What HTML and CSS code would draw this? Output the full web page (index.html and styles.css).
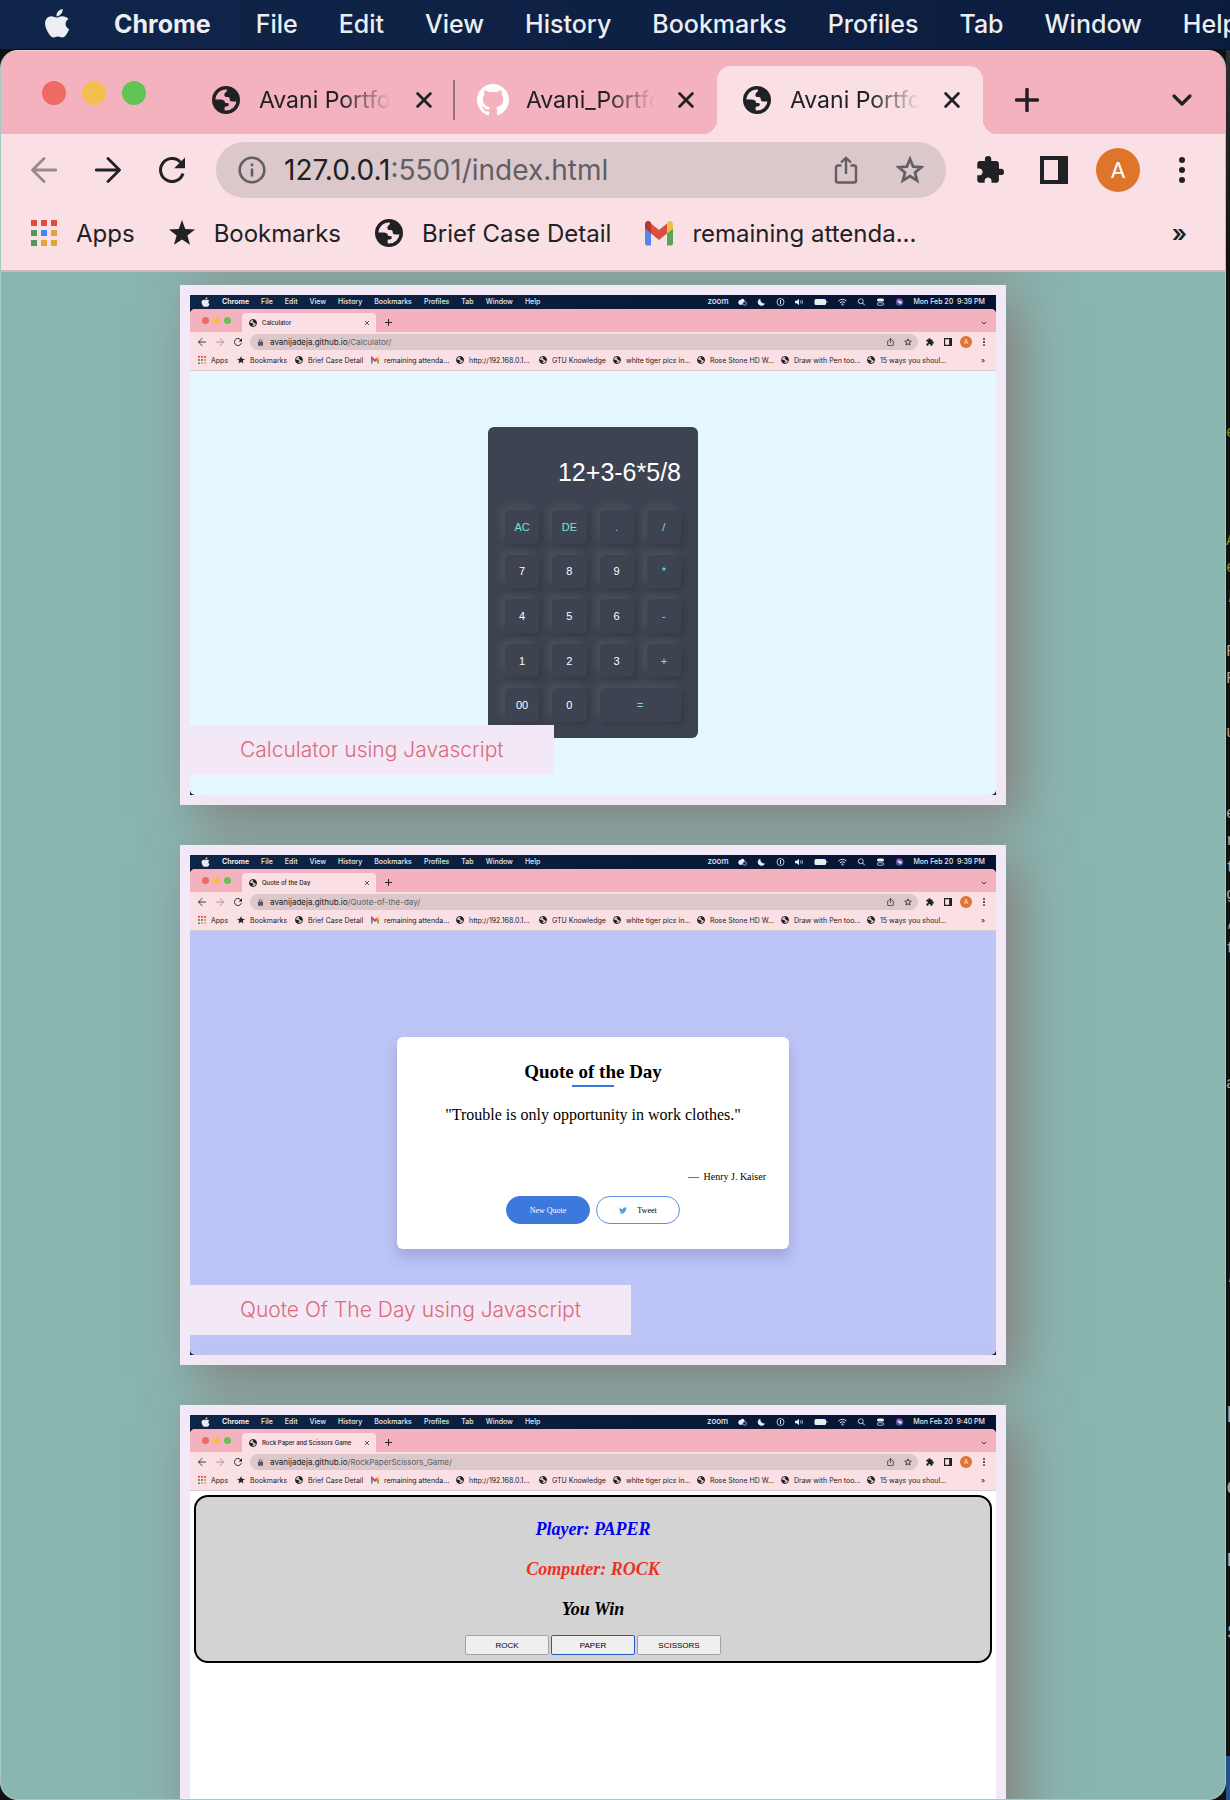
FILE: index.html
```html
<!DOCTYPE html>
<html lang="en">
<head>
<meta charset="utf-8">
<title>Avani Portfolio</title>
<link rel="stylesheet" href="styles.css">
</head>
<body>
<svg class="sprite" aria-hidden="true">
  <symbol id="apple" viewBox="0 0 24 28"><path d="M17.2 1c.2 2-.6 3.700-1.700 4.900-1.100 1.200-2.600 2-4 1.900-.2-1.800.6-3.600 1.600-4.700C14.200 1.900 15.900 1.100 17.200 1zM22.600 10.200c-1.700 1-2.700 2.500-2.700 4.600 0 2.400 1.300 4.200 3.300 5-.7 2-1.700 3.800-2.900 5.300-.9 1.200-1.900 2.300-3.500 2.300-1.500 0-2-.9-4-.9-1.900 0-2.600.9-4 .9-1.500.1-2.700-1.200-3.700-2.500C2.900 21.900 1 17.500 1 14.500 1 10.300 3.700 7.800 6.900 7.800c1.900 0 3.400 1.200 4.700 1.200 1.200 0 3-1.300 5.200-1.300 2.300 0 4.500 1 5.800 2.500z"/></symbol>
  <symbol id="globe" viewBox="0 0 28 28"><circle cx="14" cy="14" r="12.300" fill="none" stroke="currentColor" stroke-width="3.400"/><path d="M15 2c0 2 .4 3-1.200 4.200-1.300 1-1.800 2.200-1.300 3.500.4 1.200 1.500 1.500 3 1.300 1.500-.2 2.200.5 2.200 2 0 1.700 1 2.500 2.500 2.500h6.300C27 8 22 2 15 2z"/><path d="M2 13.500h6.500c3 0 4.500 1.500 4.700 3.500h2c1.300 0 1.800.8 1.500 2-.3 1.300-1.200 1.500-2.700 1.500-.9 0-1.400.5-1.400 1.500v4C6 25.500 2 20 2 13.500z"/></symbol>
  <symbol id="github" viewBox="0 0 16 16"><path d="M8 0C3.580 0 0 3.580 0 8c0 3.540 2.290 6.530 5.470 7.590.4.070.55-.17.55-.38 0-.19-.01-.82-.01-1.490-2.010.37-2.530-.49-2.690-.94-.09-.23-.48-.94-.82-1.130-.28-.15-.68-.52-.01-.53.63-.01 1.080.58 1.230.82.72 1.210 1.870.87 2.330.66.07-.52.28-.87.51-1.070-1.780-.2-3.640-.89-3.640-3.950 0-.87.31-1.590.82-2.150-.08-.2-.36-1.020.08-2.120 0 0 .67-.21 2.200.82a7.600 7.600 0 0 1 4 0c1.530-1.040 2.200-.82 2.200-.82.44 1.100.16 1.920.08 2.120.51.56.82 1.270.82 2.150 0 3.070-1.870 3.750-3.650 3.950.29.25.54.73.54 1.480 0 1.070-.01 1.930-.01 2.200 0 .21.15.46.55.38A8 8 0 0 0 16 8c0-4.420-3.580-8-8-8z"/></symbol>
  <symbol id="close" viewBox="0 0 24 24"><path d="M5 5l14 14M19 5L5 19" fill="none" stroke="currentColor" stroke-width="3" stroke-linecap="round"/></symbol>
  <symbol id="plus" viewBox="0 0 24 24"><path d="M12 1.500v21M1.500 12h21" fill="none" stroke="currentColor" stroke-width="3.500" stroke-linecap="round"/></symbol>
  <symbol id="chevron" viewBox="0 0 24 24"><path d="M4 8l8 8 8-8" fill="none" stroke="currentColor" stroke-width="3.200" stroke-linecap="round" stroke-linejoin="round"/></symbol>
  <symbol id="back" viewBox="0 0 26 26"><path d="M25 13H2M13 1.500L1.500 13 13 24.500" fill="none" stroke="currentColor" stroke-width="2.800" stroke-linejoin="round" stroke-linecap="round"/></symbol>
  <symbol id="forward" viewBox="0 0 26 26"><path d="M1 13h23M13 1.500L24.500 13 13 24.500" fill="none" stroke="currentColor" stroke-width="2.800" stroke-linejoin="round" stroke-linecap="round"/></symbol>
  <symbol id="reload" viewBox="0 0 26 26"><path d="M24 16.500A11.500 11.500 0 1 1 21.500 5.200" fill="none" stroke="currentColor" stroke-width="3"/><path d="M26 .5v10.800H15.200z"/></symbol>
  <symbol id="info" viewBox="0 0 28 28"><circle cx="14" cy="14" r="12.300" fill="none" stroke="currentColor" stroke-width="2.600"/><path d="M12.700 12.500h2.600v8h-2.600zM12.700 7.500h2.600v2.700h-2.600z"/></symbol>
  <symbol id="lock" viewBox="0 0 12 16"><path d="M0 6h12v10H0z"/><path d="M3 7V4a3 3 0 0 1 6 0v3" fill="none" stroke="currentColor" stroke-width="1.800"/></symbol>
  <symbol id="share" viewBox="0 0 24 28"><path d="M7.500 9.500H4a2 2 0 0 0-2 2v13a2 2 0 0 0 2 2h16a2 2 0 0 0 2-2v-13a2 2 0 0 0-2-2h-3.500M12 18V2M7 6.500L12 1.800l5 4.700" fill="none" stroke="currentColor" stroke-width="2.400"/></symbol>
  <symbol id="star-line" viewBox="0 0 24 24"><path d="M12 2.500l2.700 6.600 7.100.5-5.500 4.600 1.800 6.900-6.100-3.800-6.100 3.800 1.800-6.900-5.500-4.600 7.100-.5z" fill="none" stroke="currentColor" stroke-width="2.300"/></symbol>
  <symbol id="star" viewBox="0 0 24 24"><path d="M12 0l3 8.300 9 .4-7 5.500 2.400 8.600L12 18l-7.400 4.800L7 14.200 0 8.700l9-.4z"/></symbol>
  <symbol id="puzzle" viewBox="1 1 22 22"><path d="M20.500 11H19V7c0-1.100-.9-2-2-2h-4V3.500a2.500 2.500 0 0 0-5 0V5H4c-1.100 0-1.990.9-1.990 2v3.800H3.500c1.490 0 2.700 1.210 2.700 2.700s-1.210 2.700-2.700 2.700H2V20c0 1.100.9 2 2 2h3.800v-1.500c0-1.490 1.210-2.700 2.700-2.700s2.700 1.210 2.700 2.700V22H17c1.100 0 2-.9 2-2v-4h1.500a2.500 2.500 0 0 0 0-5z"/></symbol>
  <symbol id="panel" viewBox="0 0 28 28"><path d="M0 0h28v28H0zM4 4v20h14V4z" fill-rule="evenodd"/></symbol>
  <symbol id="dots" viewBox="0 0 6 26"><circle cx="3" cy="3" r="3"/><circle cx="3" cy="13" r="3"/><circle cx="3" cy="23" r="3"/></symbol>
  <symbol id="apps" viewBox="0 0 26 26"><path fill="#e24a3b" d="M0 0h6v6H0zM10 0h6v6h-6zM20 0h6v6h-6z"/><path fill="#4f9a58" d="M0 10h6v6H0zM0 20h6v6H0z"/><path fill="#4285f4" d="M10 10h6v6h-6z"/><path fill="#e3a53b" d="M20 10h6v6h-6zM10 20h6v6h-6zM20 20h6v6h-6z"/></symbol>
  <symbol id="gmail" viewBox="0 0 28 25"><path fill="#5186ec" d="M0 8l6 4.500V25H2a2 2 0 0 1-2-2z"/><path fill="#57a55b" d="M28 8l-6 4.500V25h4a2 2 0 0 0 2-2z"/><path fill="#d95040" d="M6 3l8 6.500L22 3v10l-8 6.500L6 13z"/><path fill="#b5362a" d="M0 4C0 .5 3.300-1 6 2v11L0 8z"/><path fill="#f2be42" d="M28 4c0-3.500-3.300-5-6-2v11l6-5z"/></symbol>
  <symbol id="bird" viewBox="0 0 24 20"><path fill="#4ba3f0" d="M24 2.400c-.9.400-1.800.6-2.800.8 1-.6 1.800-1.600 2.200-2.700-1 .6-2 1-3.100 1.200A4.900 4.900 0 0 0 11.900 6C7.800 5.800 4.200 3.900 1.700.9c-1.300 2.200-.7 5.100 1.500 6.600-.8 0-1.600-.2-2.200-.6 0 2.300 1.600 4.400 3.900 4.900-.7.200-1.500.2-2.200.1.600 2 2.400 3.400 4.600 3.400A9.900 9.900 0 0 1 0 17.300 14 14 0 0 0 21.500 4.900c1-.7 1.800-1.600 2.500-2.500z"/></symbol>
  <symbol id="battery" viewBox="0 0 26 12"><rect width="23" height="12" rx="3"/><path d="M24.500 4v4"  stroke="currentColor" stroke-width="1.500"/></symbol>
  <symbol id="moon" viewBox="0 0 16 16"><path d="M6 1a7.500 7.500 0 1 0 9 10A8 8 0 0 1 6 1z"/></symbol>
  <symbol id="circle-one" viewBox="0 0 16 16"><circle cx="8" cy="8" r="7" fill="none" stroke="currentColor" stroke-width="1.600"/><path d="M7 4h2v8H7z"/></symbol>
  <symbol id="sound" viewBox="0 0 20 16"><path d="M0 5h4l5-4v14l-5-4H0z"/><path d="M12 5q2 3 0 6M15 3q4 5 0 10" fill="none" stroke="currentColor" stroke-width="1.500"/></symbol>
  <symbol id="wifi" viewBox="0 0 20 16"><path d="M1 6q9-8 18 0M4.500 9.500q5.500-5 11 0M8 13l2 2 2-2q-2-1.500-4 0z" fill="none" stroke="currentColor" stroke-width="2.200"/></symbol>
  <symbol id="search" viewBox="0 0 16 16"><circle cx="6.500" cy="6.500" r="5" fill="none" stroke="currentColor" stroke-width="1.600"/><path d="M10 10l5 5" stroke="currentColor" stroke-width="1.800"/></symbol>
  <symbol id="toggles" viewBox="0 0 16 16"><rect x="1" y="1" width="14" height="6" rx="3"/><rect x="1.500" y="9.500" width="13" height="5" rx="2.500" fill="none" stroke="currentColor" stroke-width="1.500"/></symbol>
  <symbol id="siri" viewBox="0 0 16 16"><circle cx="8" cy="8" r="7.500" fill="#5b4aa0"/><circle cx="6" cy="6" r="3.500" fill="#e05a8a"/><circle cx="10" cy="9" r="3.500" fill="#6fc7e8"/><circle cx="8" cy="8" r="2" fill="#fff"/></symbol>
  <symbol id="cloud" viewBox="0 0 20 16"><circle cx="6" cy="9" r="5.500"/><circle cx="10" cy="5" r="4.500"/><circle cx="14.500" cy="11" r="4" fill="#06183a" stroke="currentColor" stroke-width="1.500"/></symbol>
</svg>

<nav class="menubar" aria-label="Menu bar">
  <svg class="menubar-logo"><use href="#apple"/></svg>
  <a href="#" class="menubar-app">Chrome</a><a href="#">File</a><a href="#">Edit</a><a href="#">View</a><a href="#">History</a><a href="#">Bookmarks</a><a href="#">Profiles</a><a href="#">Tab</a><a href="#">Window</a><a href="#">Help</a>
</nav>

<div class="desktop">
  <div class="window">
    <div class="tabstrip">
      <div class="lights"><i class="red"></i><i class="amber"></i><i class="green"></i></div>
      <div class="tab tab-ruled"><svg class="icon-l"><use href="#globe"/></svg><span class="tab-title">Avani Portfolio</span><button aria-label="Close tab"><svg><use href="#close"/></svg></button></div>
      <div class="tab tab-github"><svg class="icon-xl"><use href="#github"/></svg><span class="tab-title">Avani_Portfolio</span><button aria-label="Close tab"><svg><use href="#close"/></svg></button></div>
      <div class="tab tab-active"><svg class="icon-l"><use href="#globe"/></svg><span class="tab-title">Avani Portfolio</span><button aria-label="Close tab"><svg><use href="#close"/></svg></button></div>
      <button class="new-tab" aria-label="New tab"><svg><use href="#plus"/></svg></button>
      <button class="tab-menu" aria-label="Search tabs"><svg><use href="#chevron"/></svg></button>
    </div>
    <div class="toolbar">
      <button class="faded" aria-label="Back"><svg><use href="#back"/></svg></button>
      <button aria-label="Forward"><svg><use href="#forward"/></svg></button>
      <button aria-label="Reload"><svg><use href="#reload"/></svg></button>
      <div class="omnibox">
        <svg class="icon-l"><use href="#info"/></svg>
        <label for="address">127.0.0.1</label><input id="address" type="text" value=":5501/index.html">
        <button aria-label="Share"><svg class="share"><use href="#share"/></svg></button>
        <button aria-label="Bookmark this page"><svg class="icon-l"><use href="#star-line"/></svg></button>
      </div>
      <div class="tools">
        <button aria-label="Extensions"><svg class="icon-l"><use href="#puzzle"/></svg></button>
        <button aria-label="Side panel"><svg class="icon-l"><use href="#panel"/></svg></button>
        <button class="avatar">A</button>
        <button class="overflow" aria-label="More"><svg class="dots"><use href="#dots"/></svg></button>
      </div>
    </div>
    <div class="bookmarks">
      <a href="#"><svg><use href="#apps"/></svg>Apps</a>
      <a href="#"><svg><use href="#star"/></svg>Bookmarks</a>
      <a href="#"><svg class="icon-l"><use href="#globe"/></svg>Brief Case Detail</a>
      <a href="#"><svg class="icon-l"><use href="#gmail"/></svg>remaining attenda...</a>
      <button class="more" aria-label="More bookmarks">»</button>
    </div>

    <main class="page">
      <div class="card card-previous"></div>

      <article class="card">
        <div class="shot">
          <div class="shot-chrome" data-title="Calculator" data-path="Calculator/" data-time="9:39"></div>
          <div class="shot-body sky">
            <div class="calculator">
              <output>12+3-6*5/8</output>
              <div class="keys">
                <button class="op">AC</button><button class="op">DE</button><button class="op">.</button><button class="op">/</button>
                <button>7</button><button>8</button><button>9</button><button class="op">*</button>
                <button>4</button><button>5</button><button>6</button><button class="op">-</button>
                <button>1</button><button>2</button><button>3</button><button class="op">+</button>
                <button>00</button><button>0</button><button class="op wide">=</button>
              </div>
            </div>
          </div>
        </div>
        <h2 class="caption">Calculator using Javascript</h2>
      </article>

      <article class="card">
        <div class="shot">
          <div class="shot-chrome" data-title="Quote of the Day" data-path="Quote-of-the-day/" data-time="9:39"></div>
          <div class="shot-body lilac">
            <div class="quote">
              <h3>Quote of the Day</h3>
              <p class="quote-text">"Trouble is only opportunity in work clothes."</p>
              <p class="quote-author">Henry J. Kaiser</p>
              <div class="quote-actions">
                <button class="primary">New Quote</button>
                <button><svg><use href="#bird"/></svg>Tweet</button>
              </div>
            </div>
          </div>
        </div>
        <h2 class="caption">Quote Of The Day using Javascript</h2>
      </article>

      <article class="card">
        <div class="shot">
          <div class="shot-chrome" data-title="Rock Paper and Scissors Game" data-path="RockPaperScissors_Game/" data-time="9:40"></div>
          <div class="shot-body white">
            <div class="game">
              <p class="player">Player: PAPER</p>
              <p class="computer">Computer: ROCK</p>
              <p>You Win</p>
              <div class="game-actions"><button>ROCK</button><button class="picked">PAPER</button><button>SCISSORS</button></div>
            </div>
          </div>
        </div>
      </article>
    </main>
  </div>

  <aside class="editor" aria-hidden="true">
<pre class="code olive">e



A
e
;</pre>
<pre class="code">

F
F

u


e
r
t
g
,
t




a</pre>
<pre class="code large">

,
;
F
o
n
s</pre>
  <div class="editor-status"></div>
  </aside>
</div>

<template id="shot-chrome">
  <div class="s-menu">
    <svg class="s-apple"><use href="#apple"/></svg>
    <div class="s-menu-items"><b>Chrome</b><span>File</span><span>Edit</span><span>View</span><span>History</span><span>Bookmarks</span><span>Profiles</span><span>Tab</span><span>Window</span><span>Help</span></div>
    <div class="s-status"><span class="s-zoom">zoom</span><svg><use href="#cloud"/></svg><svg><use href="#moon"/></svg><svg><use href="#circle-one"/></svg><svg><use href="#sound"/></svg><svg class="s-battery"><use href="#battery"/></svg><svg><use href="#wifi"/></svg><svg><use href="#search"/></svg><svg><use href="#toggles"/></svg><svg><use href="#siri"/></svg></div>
    <span class="s-clock"></span>
  </div>
  <div class="s-window">
    <div class="s-tabs">
      <div class="s-lights"><i class="red"></i><i class="amber"></i><i class="green"></i></div>
      <div class="s-tab"><svg><use href="#globe"/></svg><span class="s-title"></span><svg class="s-close"><use href="#close"/></svg></div>
      <svg class="s-plus"><use href="#plus"/></svg>
      <svg class="s-chevron"><use href="#chevron"/></svg>
    </div>
    <div class="s-bar">
      <svg><use href="#back"/></svg><svg class="faded"><use href="#forward"/></svg><svg><use href="#reload"/></svg>
      <div class="s-omnibox"><svg class="s-lock"><use href="#lock"/></svg><span>avanijadeja.github.io</span><span class="s-path"></span><svg class="s-share"><use href="#share"/></svg><svg><use href="#star-line"/></svg></div>
      <div class="s-tools"><svg><use href="#puzzle"/></svg><svg><use href="#panel"/></svg><span class="s-avatar">A</span><svg><use href="#dots"/></svg></div>
    </div>
    <div class="s-marks">
      <span><svg><use href="#apps"/></svg>Apps</span><span><svg><use href="#star"/></svg>Bookmarks</span><span><svg><use href="#globe"/></svg>Brief Case Detail</span><span><svg><use href="#gmail"/></svg>remaining attenda...</span><span><svg><use href="#globe"/></svg>http://192.168.0.1...</span><span><svg><use href="#globe"/></svg>GTU Knowledge</span><span><svg><use href="#globe"/></svg>white tiger pics in...</span><span><svg><use href="#globe"/></svg>Rose Stone HD W...</span><span><svg><use href="#globe"/></svg>Draw with Pen too...</span><span><svg><use href="#globe"/></svg>15 ways you shoul...</span><span class="s-more">»</span>
    </div>
  </div>
</template>
<script src="script.js"></script>
</body>
</html>
```
FILE: script.js
```js
const template = document.getElementById('shot-chrome');

document.querySelectorAll('.shot-chrome').forEach((slot) => {
  const view = template.content.cloneNode(true);
  view.querySelector('.s-title').textContent = slot.dataset.title;
  view.querySelector('.s-path').textContent = '/' + slot.dataset.path;
  view.querySelector('.s-clock').textContent = 'Mon Feb 20\u00a0 ' + slot.dataset.time + ' PM';
  slot.append(view);
});
```
FILE: styles.css
```css
* { box-sizing: border-box; }

:root {
  --rose: #f4b1be;
  --blush: #fae0e4;
  --field: #dcc7ca;
  --ink: #202124;
  --teal: #8ab6b0;
  --frame: #f3e8f5;
}

body {
  margin: 0;
  height: 100vh;
  overflow: hidden;
  display: flex;
  flex-direction: column;
  background: #000;
  color: var(--ink);
  font-family: Inter, "Liberation Sans", sans-serif;
}

a { color: inherit; text-decoration: none; }
button { border: 0; padding: 0; background: none; color: inherit; font: inherit; }
p, h2, h3, pre { margin: 0; }
svg { display: block; fill: currentColor; flex: none; }
.sprite { width: 0; height: 0; position: absolute; }
i { display: block; border-radius: 50%; }
.red { background: #ed6b60; }
.amber { background: #f5bf4f; }
.green { background: #61c555; }
.faded { opacity: .45; }
.icon-l { width: 28px; height: 28px; }
.icon-xl { width: 32px; height: 32px; }

/* System menu bar */
.menubar {
  flex: none;
  display: flex;
  align-items: center;
  gap: 41px;
  height: 49px;
  padding: 0 0 2px 44px;
  overflow: hidden;
  white-space: nowrap;
  background: linear-gradient(90deg, #10254a, #0b1d3f);
  color: #eceef1;
  font-size: 25px;
  font-weight: 500;
}
.menubar-logo { width: 26px; height: 32px; margin: 0 3px 2px 0; }
.menubar-app { font-weight: 700; margin-right: 4px; }

/* Browser window */
.desktop { flex: 1; min-height: 0; display: flex; padding-top: 1px; background: #111; }
.window {
  flex: 1;
  min-width: 0;
  display: flex;
  flex-direction: column;
  overflow: hidden;
  border: 1px solid;
  border-color: #fbd0d8 #a5c9c4 #a5c9c4;
  border-radius: 18px;
  background: var(--teal);
}

.tabstrip { flex: none; display: flex; align-items: flex-end; height: 83px; background: var(--rose); font-size: 23px; }
.lights { display: flex; gap: 16px; align-self: center; margin: 0 53px 0 41px; }
.lights i { width: 24px; height: 24px; }
.tab { display: flex; align-items: center; gap: 19px; height: 68px; padding: 0 20px 0 13px; }
.tab-title {
  flex: 1;
  overflow: hidden;
  white-space: nowrap;
  mask-image: linear-gradient(90deg, #000 60%, transparent 98%);
}
.tab button svg { width: 22px; height: 22px; }
.tab-ruled { width: 256px; background: linear-gradient(#94707a, #94707a) right center / 2px 40px no-repeat; }
.tab-github { width: 262px; gap: 17px; padding-left: 22px; }
.tab-github .icon-xl { color: #fff; }
.tab-active {
  position: relative;
  border-radius: 14px 14px 0 0;
  background: var(--blush);
  width: 266px;
  padding-left: 26px;
}
.tab-active::before, .tab-active::after {
  content: "";
  position: absolute;
  bottom: 0;
  width: 14px;
  height: 14px;
}
.tab-active::before { right: 100%; background: radial-gradient(circle at 0 0, transparent 14px, var(--blush) 14px); }
.tab-active::after { left: 100%; background: radial-gradient(circle at 100% 0, transparent 14px, var(--blush) 14px); }
.new-tab { height: 68px; margin-left: 32px; }
.new-tab svg { width: 24px; height: 24px; }
.tab-menu { height: 68px; margin: 0 31px 0 auto; }
.tab-menu svg { width: 24px; height: 24px; }

.toolbar { flex: none; display: flex; align-items: center; height: 72px; padding: 0 40px 0 30px; background: var(--blush); }
.toolbar > button { width: 26px; margin-right: 38px; }
.toolbar > button:nth-of-type(3) { margin-right: 31px; }
.toolbar > button svg { width: 26px; height: 26px; }
.omnibox {
  flex: 1;
  min-width: 0;
  display: flex;
  align-items: center;
  height: 56px;
  padding: 0 22px;
  border-radius: 28px;
  background: var(--field);
  color: #5f5f64;
  font-size: 28px;
}
.omnibox label { margin-left: 18px; color: var(--ink); }
.omnibox input { flex: 1; min-width: 0; border: 0; padding: 0; background: none; color: inherit; font: inherit; outline: 0; }
.omnibox button + button { margin-left: 38px; }
.share { width: 24px; height: 28px; }
.tools { display: flex; align-items: center; gap: 36px; margin-left: 30px; }
.avatar { width: 44px; height: 44px; border-radius: 50%; margin: 0 -8px; background: #df742b; color: #fff; font-size: 22px; }
.overflow { margin-left: 11px; }
.dots { width: 6px; height: 26px; }

.bookmarks {
  flex: none;
  display: flex;
  gap: 34px;
  height: 66px;
  padding: 0 38px 10px 30px;
  border-bottom: 2px solid #cbb6bb;
  background: var(--blush);
  font-size: 24px;
}
.bookmarks a { display: flex; align-items: center; gap: 19px; }
.bookmarks svg { width: 26px; height: 26px; }
.bookmarks svg.icon-l { width: 28px; height: 28px; }
.more { margin-left: auto; font-weight: 600; }

/* Portfolio page */
.page {
  flex: 1;
  min-height: 0;
  overflow: hidden;
  display: flex;
  flex-direction: column;
  align-items: center;
  gap: 40px;
  padding-right: 40px;
}
.card {
  flex: none;
  display: grid;
  align-items: end;
  width: 826px;
  max-width: 100%;
  padding: 10px;
  background: var(--frame);
  box-shadow: 15px 15px 50px rgba(132, 104, 105, .7);
}
.card-previous { height: 20px; margin-top: -47px; }
.shot, .caption { grid-area: 1 / 1; }
.shot { display: flex; flex-direction: column; height: 500px; background: #06132f; overflow: hidden; }
.caption {
  z-index: 1;
  justify-self: start;
  margin-bottom: 20px;
  padding: 0 50px;
  background: var(--frame);
  color: #dc6a7c;
  font-size: 21px;
  font-weight: 300;
  line-height: 50px;
}
.shot-body { flex: 1; display: flex; flex-direction: column; align-items: center; border-radius: 0 0 5px 5px; }
.sky { background: #e5f7ff; padding-top: 56px; }
.lilac { background: #bdc5f7; padding-top: 106px; }
.white { background: #fff; padding: 4px; }

/* Small browser frame inside each shot */
.shot-chrome { flex: none; font-size: 7px; line-height: 9px; white-space: nowrap; }
.s-menu { display: flex; align-items: center; height: 14px; padding: 0 11px 1px; background: linear-gradient(90deg, #0f2547, #041230); color: #e8ebf0; font-weight: 500; }
.s-apple { width: 9px; height: 10px; margin-right: 12px; }
.s-menu-items { display: flex; gap: 12px; }
.s-status { display: flex; align-items: center; gap: 10px; margin: 0 9px 0 auto; }
.s-status svg { width: 9px; height: 8px; }
.s-status .s-battery { width: 14px; height: 6px; }
.s-zoom { font-size: 8px; }
.s-window { border-radius: 5px 5px 0 0; overflow: hidden; background: var(--blush); }
.s-tabs { display: flex; align-items: flex-end; height: 23px; background: var(--rose); }
.s-lights { display: flex; gap: 4px; align-self: center; margin: 0 11px 0 12px; }
.s-lights i { width: 7px; height: 7px; }
.s-tab { display: flex; align-items: center; width: 134px; height: 19px; padding: 0 6px 0 7px; gap: 5px; border-radius: 4px 4px 0 0; background: var(--blush); font-size: 6px; font-weight: 500; }
.s-tab svg { width: 8px; height: 8px; }
.s-title { flex: 1; }
.s-tab .s-close { width: 6px; height: 6px; }
.s-plus { width: 7px; height: 7px; margin: 0 0 6px 9px; }
.s-chevron { width: 6px; height: 6px; margin: 0 9px 6px auto; }
.s-bar { display: flex; align-items: center; gap: 10px; height: 20px; padding: 0 11px 0 8px; }
.s-bar svg { width: 8px; height: 8px; }
.s-omnibox { flex: 1; display: flex; align-items: center; height: 16px; margin-left: -2px; padding: 0 6px 0 8px; border-radius: 8px; background: var(--field); font-size: 8px; }
.s-omnibox .s-lock { width: 5px; height: 7px; margin-right: 7px; color: #55565a; }
.s-path { flex: 1; color: #5f5f64; }
.s-omnibox .s-share { width: 7px; margin-right: 10px; }
.s-tools { display: flex; align-items: center; gap: 10px; margin-left: -2px; }
.s-tools svg:last-child { width: 2px; margin-left: 3px; }
.s-avatar { width: 12px; height: 12px; margin: 0 -2px; border-radius: 50%; background: #df742b; color: #fff; font-size: 6px; line-height: 12px; text-align: center; }
.s-marks {
  display: grid;
  grid-template-columns: 39px 58px 76px 85px 83px 74px 84px 84px 86px 1fr auto;
  height: 19px;
  padding: 0 11px 2px 8px;
  border-bottom: 1px solid #d9cbd2;
}
.s-marks span { display: flex; align-items: center; gap: 5px; }
.s-marks svg { width: 8px; height: 8px; }

/* Calculator */
.calculator { display: flex; flex-direction: column; width: 210px; height: 311px; padding: 0 17px 16px; border-radius: 6px; background: #3d4350; color: #fff; font-family: "Liberation Sans", sans-serif; }
.calculator output { flex: 1; padding-top: 10px; font-size: 25px; line-height: 70px; text-align: right; }
.keys { display: grid; grid-template-columns: repeat(4, 1fr); gap: 11px 13px; height: 212px; font-size: 11px; }
.keys button { border-radius: 5px; background: #3d4350; box-shadow: -4px -4px 8px rgba(255, 255, 255, .08), 3px 3px 6px rgba(0, 0, 0, .14); }
.keys .op { color: #6fe9c9; }
.keys .wide { grid-column: span 2; }

/* Quote */
.quote { display: flex; flex-direction: column; align-items: center; width: 392px; height: 212px; padding: 21px 23px; border-radius: 6px; background: #fff; color: #000; font-family: "Liberation Serif", serif; box-shadow: 0 8px 14px rgba(60, 70, 130, .25); }
.quote h3 { font-size: 19px; line-height: 27px; }
.quote h3::after { content: ""; display: block; width: 42px; height: 2px; margin: 0 auto; background: #3b79dd; }
.quote-text { margin-top: 16px; font-size: 16px; line-height: 24px; }
.quote-author { display: flex; align-items: center; gap: 5px; align-self: flex-end; margin-top: 44px; font-size: 10px; line-height: 12px; }
.quote-author::before { content: ""; width: 11px; height: 1px; background: #3b79dd; }
.quote-actions { display: flex; gap: 6px; margin-top: 13px; font-size: 8px; }
.quote-actions button { display: flex; align-items: center; justify-content: center; gap: 10px; width: 84px; height: 28px; border: 1px solid #5b8fe5; border-radius: 14px; background: #fff; }
.quote-actions .primary { background: #3b79dd; color: #fff; border-color: #3b79dd; }
.quote-actions svg { width: 8px; height: 7px; }

/* Rock paper scissors */
.game { align-self: stretch; padding: 12px 0 6px; border: 2px solid #000; border-radius: 14px; background: #d3d3d3; color: #000; text-align: center; font-family: "Liberation Serif", serif; }
.game p { font-size: 18px; font-style: italic; font-weight: 700; line-height: 40px; }
.game .player { color: #0000f5; }
.game .computer { color: #ea3323; }
.game-actions { display: flex; justify-content: center; gap: 2px; margin-top: 6px; font: 8px "Liberation Sans", sans-serif; }
.game-actions button { width: 84px; height: 20px; border: 1px solid #a3a3a3; border-radius: 2px; background: #efefef; }
.game-actions .picked { border-color: #2459c4; }

/* Editor peeking out behind the window */
.editor { flex: none; display: flex; flex-direction: column; width: 4px; overflow: hidden; background: linear-gradient(#2d302f, #1c1e1e 8%, #111 12%); color: #a8a8a8; }
.code { margin-top: 3px; font: 16px/27px "Liberation Mono", monospace; }
.olive { margin-top: 370px; color: #8a8a20; }
.large { margin: 66px 0 88px; line-height: 72px; font-size: 24px; }
.editor-status { flex: 1; background: #24508f; }
```
